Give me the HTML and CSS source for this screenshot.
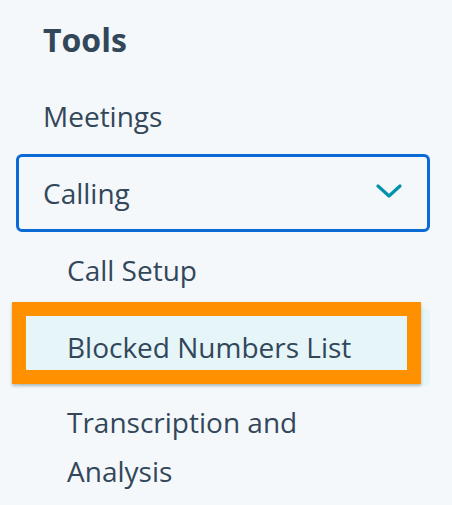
FILE: index.html
```html
<!DOCTYPE html>
<html lang="en">
<head>
    <meta charset="UTF-8">
    <meta name="viewport" content="width=device-width, initial-scale=1.0">
    <title>Tools</title>
    <link rel="stylesheet" href="styles.css">
</head>
<body>
    <nav class="sidebar">
        <h2 class="title">Tools</h2>
        <a class="item" href="#">Meetings</a>
        <button class="group">
            <span>Calling</span>
            <svg class="chevron" width="26" height="15" viewBox="0 0 26 15">
                <path d="M2 2 L13 12 L24 2" fill="none" stroke="#0091ae" stroke-width="3.2" stroke-linecap="round" stroke-linejoin="round"/>
            </svg>
        </button>
        <a class="sub" href="#">Call Setup</a>
        <a class="sub active" href="#">Blocked Numbers List</a>
        <a class="sub multi" href="#">Transcription and<br>Analysis</a>
    </nav>
</body>
</html>
```

FILE: styles.css
```css
body {
    margin: 0;
    background-color: #f5f8fa;
    font-family: "Open Sans", Arial, sans-serif;
    color: #33475b;
}
.sidebar {
    display: flex;
    flex-direction: column;
    padding: 0 22px 0 16px;
}
.title {
    display: flex;
    align-items: center;
    height: 78px;
    margin: 0;
    padding-left: 27px;
    font-size: 32px;
    font-weight: 700;
}
.item, .sub {
    display: flex;
    align-items: center;
    height: 76px;
    padding-left: 27px;
    font-size: 28px;
    color: #33475b;
    text-decoration: none;
}
.group {
    display: flex;
    align-items: center;
    justify-content: space-between;
    height: 78px;
    padding: 0 25px 0 24px;
    border: 3px solid #0a6ad6;
    border-radius: 6px;
    background: transparent;
    font-family: inherit;
    font-size: 28px;
    color: #33475b;
}
.chevron {
    margin-top: -4px;
}
.sub {
    padding-left: 51px;
}
.active {
    position: relative;
    height: 78px;
    background-color: #e5f5f8;
    border-radius: 6px;
}
/* annotation frame drawn over the active row */
.active::before {
    content: "";
    position: absolute;
    left: -4px;
    top: -6px;
    width: 381px;
    height: 54px;
    border: 14px solid #ff9100;
    box-shadow: 0 2px 3px rgba(0, 0, 0, 0.25);
}
.multi {
    height: auto;
    padding-top: 12px;
    line-height: 49px;
}
```
